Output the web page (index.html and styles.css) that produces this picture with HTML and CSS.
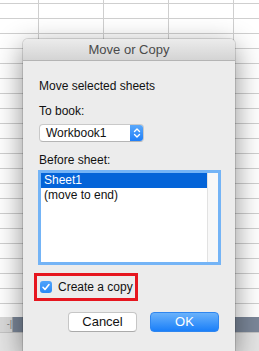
FILE: index.html
```html
<!DOCTYPE html>
<html>
<head>
<meta charset="utf-8">
<link rel="stylesheet" href="styles.css">
</head>
<body>
<div class="sheet">
  <div class="grid"></div>
  <div class="tabbar"><span class="tabbtn">-|</span></div>
  <div class="footer"></div>
</div>
<div class="dialog">
  <div class="titlebar">Move or Copy</div>
  <div class="body">
    <div class="label first">Move selected sheets</div>
    <div class="label tobook">To book:</div>
    <div class="popup">
      <span class="popup-text">Workbook1</span>
      <span class="stepper">
        <svg width="14" height="18" viewBox="0 0 14 18"><path d="M4.5 7.5 L7 5 L9.5 7.5 M4.5 10.5 L7 13 L9.5 10.5" fill="none" stroke="#fff" stroke-width="1.4" stroke-linecap="round" stroke-linejoin="round"/></svg>
      </span>
    </div>
    <div class="label before">Before sheet:</div>
    <div class="listbox">
      <div class="list">
        <div class="row selected">Sheet1</div>
        <div class="row">(move to end)</div>
      </div>
      <div class="scroll"></div>
    </div>
    <div class="highlight">
      <span class="checkbox">
        <svg width="12" height="12" viewBox="0 0 12 12"><path d="M3 6.3 L5 8.5 L9 3.5" fill="none" stroke="#fff" stroke-width="1.6" stroke-linecap="round" stroke-linejoin="round"/></svg>
      </span>
      <span class="check-label">Create a copy</span>
    </div>
    <div class="buttons">
      <button class="btn cancel">Cancel</button>
      <button class="btn ok">OK</button>
    </div>
  </div>
</div>
</body>
</html>
```
FILE: styles.css
```css
html, body {
  margin: 0;
  padding: 0;
}
body {
  width: 259px;
  height: 351px;
  overflow: hidden;
  position: relative;
  font-family: "Liberation Sans", Arial, sans-serif;
  font-size: 12px;
  color: #1a1a1a;
  background: #fff;
}
.sheet {
  display: flex;
  flex-direction: column;
  height: 351px;
}
.grid {
  height: 317px;
  background-color: #fff;
  background-image:
    linear-gradient(to right, #cfcfcf 1px, transparent 1px),
    linear-gradient(to bottom, #cfcfcf 1px, transparent 1px);
  background-size: 65px 15px, 65px 15px;
  background-position: 38px 0, 0 3px;
}
.tabbar {
  height: 15px;
  background: #7b8799;
  display: flex;
}
.tabbtn {
  width: 12px;
  background: #d9d9d9;
  border-right: 1px solid #a9a9a9;
  color: #777;
  font-size: 9px;
  line-height: 15px;
  text-align: right;
}
.footer {
  flex: 1;
  background: #e4e4e4;
  border-top: 1px solid #c4c4c4;
}
.dialog {
  position: absolute;
  left: 23px;
  top: 39px;
  width: 212px;
  height: 312px;
  background: #ececec;
  border-radius: 5px 5px 0 0;
  box-shadow: 0 0 0 1px rgba(0,0,0,0.12), 0 8px 28px rgba(0,0,0,0.45);
}
.titlebar {
  height: 21px;
  line-height: 22px;
  text-align: center;
  font-size: 13px;
  color: #4a4a4a;
  border-radius: 5px 5px 0 0;
  background: linear-gradient(#ececec, #d4d4d4);
  border-bottom: 1px solid #b4b4b4;
}
.body {
  padding: 18px 16px 0 16px;
  display: flex;
  flex-direction: column;
  align-items: flex-start;
}
.label {
  line-height: 15px;
  color: #111;
}
.tobook {
  margin-top: 10px;
}
.popup {
  margin-top: 5px;
  width: 105px;
  height: 18px;
  box-sizing: border-box;
  background: #fff;
  border: 1px solid #c9c9c9;
  border-bottom-color: #b5b5b5;
  border-radius: 4px;
  display: flex;
  align-items: center;
  overflow: hidden;
}
.popup-text {
  flex: 1;
  padding-left: 6px;
  line-height: 16px;
  color: #111;
}
.stepper {
  width: 14px;
  height: 18px;
  margin: -1px -1px -1px 0;
  background: linear-gradient(#5eabfb, #1b7cf8);
  border-radius: 0 4px 4px 0;
  display: flex;
}
.before {
  margin-top: 11px;
}
.listbox {
  margin-top: 2px;
  margin-left: -1px;
  width: 183px;
  height: 95px;
  box-sizing: border-box;
  border: 3px solid #74b4f6;
  background: #fff;
  display: flex;
}
.list {
  flex: 1;
}
.row {
  height: 15px;
  line-height: 15px;
  padding-left: 3px;
  color: #111;
}
.row.selected {
  background: #0464d8;
  color: #fff;
}
.scroll {
  width: 10px;
  background: #f8f8f8;
  border-left: 1px solid #e2e2e2;
}
.highlight {
  margin-top: 8px;
  margin-left: -5px;
  width: 104px;
  height: 28px;
  box-sizing: border-box;
  border: 3px solid #e6161f;
  display: flex;
  align-items: center;
  padding-left: 3px;
  gap: 6px;
}
.checkbox {
  width: 12px;
  height: 12px;
  border-radius: 3px;
  background: linear-gradient(#50a4fb, #2a89f7);
  display: flex;
}
.check-label {
  color: #111;
  line-height: 15px;
}
.buttons {
  margin-top: 11px;
  align-self: flex-end;
  display: flex;
  gap: 13px;
}
.btn {
  width: 69px;
  height: 20px;
  box-sizing: border-box;
  border-radius: 4px;
  font-family: "Liberation Sans", Arial, sans-serif;
  font-size: 13px;
  padding: 0;
  line-height: 18px;
}
.cancel {
  background: #fff;
  border: 1px solid #c6c6c6;
  border-bottom-color: #aaaaaa;
  color: #111;
}
.ok {
  background: linear-gradient(#6ab2fb, #1a7ff9);
  border: 1px solid #2f86ef;
  color: #fff;
}
```
